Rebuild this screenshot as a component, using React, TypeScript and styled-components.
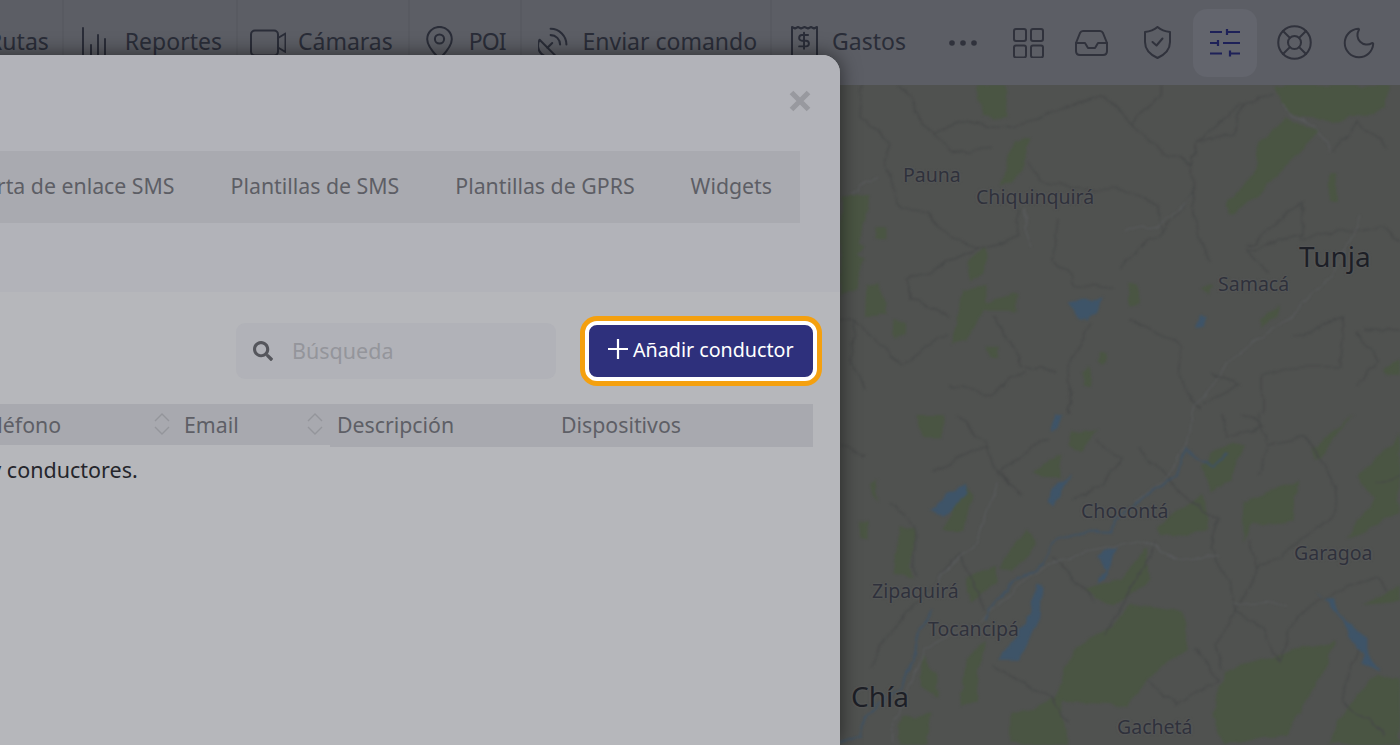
import React from "react";
import styled, { createGlobalStyle } from "styled-components";
import { LifeBuoy, Moon } from "lucide-react";
import { FaSearch } from "react-icons/fa";

const Global = createGlobalStyle`
  html, body { margin: 0; padding: 0; height: 100%; overflow: hidden; }
  * { box-sizing: border-box; }
  body { font-family: "Noto Sans", "Open Sans", Arial, sans-serif; }
`;

const Page = styled.div`
  position: relative;
  width: 1400px;
  height: 745px;
  overflow: hidden;
  display: flex;
  flex-direction: column;
  background: #505250;
`;

const TopBar = styled.header`
  flex: 0 0 85px;
  display: flex;
  justify-content: flex-end;
  align-items: stretch;
  padding-right: 9px;
  background: #5c5e65;
  color: #2a2d38;
  font-size: 23px;
`;

const NavItem = styled.div<{ $pl: number; $pr: number; $gap: number; $first?: boolean }>`
  flex: none;
  display: flex;
  align-items: center;
  gap: ${(p) => p.$gap}px;
  padding: 0 ${(p) => p.$pr}px 0 ${(p) => p.$pl}px;
  border-left: ${(p) => (p.$first ? "0" : "2px solid rgba(0, 0, 0, 0.035)")};
  white-space: nowrap;
`;

const NavLabel = styled.span<{ $tight?: boolean }>`
  margin-top: -3px;
  letter-spacing: ${(p) => (p.$tight ? "-1px" : "normal")};
`;

const IconButton = styled.div<{ $ml: number; $active?: boolean }>`
  flex: none;
  align-self: center;
  width: 64px;
  height: 68px;
  margin-left: ${(p) => p.$ml}px;
  display: flex;
  align-items: center;
  justify-content: center;
  border-radius: 14px;
  color: #30323c;
  background: ${(p) => (p.$active ? "#63656d" : "transparent")};
`;

const MapArea = styled.main`
  position: relative;
  flex: 1;
  overflow: hidden;
  background: #505250;
`;

const MapSvg = styled.svg`
  display: block;
  width: 1400px;
  height: 660px;
`;

const PlaceLabel = styled.span<{ $x: number; $y: number; $big?: boolean }>`
  position: absolute;
  left: ${(p) => p.$x}px;
  top: ${(p) => p.$y - 85}px;
  transform: translateY(-50%);
  font-size: ${(p) => (p.$big ? 28 : 19.5)}px;
  line-height: 1.2;
  color: ${(p) => (p.$big ? "#1d1f26" : "#2f313b")};
  text-shadow: 0 0 3px #5b5c5e, 0 0 2px #5b5c5e;
  white-space: nowrap;
`;

const Modal = styled.section`
  position: absolute;
  top: 55px;
  right: 560px;
  bottom: 0;
  width: 946px;
  display: flex;
  flex-direction: column;
  background: #b6b7bb;
  border-top-right-radius: 18px;
  box-shadow: 0 0 20px rgba(0, 0, 0, 0.55);
`;

const ModalHeader = styled.div`
  flex: none;
  padding: 96px 40px 69px 0;
  background: #b2b3b9;
  border-top-right-radius: 18px;
`;

const CloseButton = styled.div`
  position: absolute;
  top: 35px;
  right: 29px;
  width: 22px;
  height: 22px;
  color: #98999f;
`;

const TabStrip = styled.nav`
  display: flex;
  justify-content: flex-end;
  height: 72px;
  background: #a9aab0;
  overflow: hidden;
`;

const Tab = styled.span`
  flex: none;
  align-self: center;
  margin-bottom: 4px;
  padding: 0 28px;
  font-size: 21.3px;
  color: #5d5e65;
  white-space: nowrap;
`;

const Toolbar = styled.div`
  flex: none;
  display: flex;
  justify-content: flex-end;
  align-items: center;
  gap: 29px;
  padding: 29px 23px 23px 0;
`;

const SearchBox = styled.label`
  width: 320px;
  height: 56px;
  display: flex;
  align-items: center;
  gap: 19px;
  padding-left: 17px;
  border-radius: 9px;
  background: #b1b2b8;
  color: #55565c;
`;

const SearchInput = styled.input`
  flex: 1;
  min-width: 0;
  border: 0;
  outline: 0;
  padding: 0 0 2px;
  background: transparent;
  font: inherit;
  font-size: 21.5px;
  &::placeholder { color: #94959b; opacity: 1; }
`;

const PrimaryButton = styled.button`
  width: 232px;
  height: 60px;
  display: flex;
  align-items: center;
  gap: 5px;
  padding: 0 0 4px 19px;
  border: 4px solid #ffffff;
  border-radius: 12px;
  outline: 0;
  box-shadow: 0 0 0 5px #f4a00f;
  background: #2e307c;
  color: #ffffff;
  font: inherit;
  font-size: 19.7px;
  white-space: nowrap;
`;

const Table = styled.div`
  padding: 0 27px 0 28px;
`;

const HeadRow = styled.div`
  display: grid;
  grid-template-columns: 1fr 158px 219px 264px;
  align-items: start;
`;

const HeadCell = styled.div<{ $tall?: boolean; $pl: number; $pr: number }>`
  height: ${(p) => (p.$tall ? 43 : 41)}px;
  display: flex;
  align-items: flex-start;
  justify-content: space-between;
  padding: 5px ${(p) => p.$pr}px 0 ${(p) => p.$pl}px;
  line-height: 32px;
  font-size: 21.3px;
  color: #5e5f66;
  background: #a8a9af;
  white-space: nowrap;
`;

const SortGlyph = styled.svg`
  flex: none;
  margin-top: 4px;
  color: #94959b;
`;

const EmptyRow = styled.div`
  margin-top: 8px;
  padding-left: 8px;
  line-height: 30px;
  font-size: 21.5px;
  color: #25262c;
  white-space: nowrap;
`;

const line = { fill: "none", stroke: "currentColor", strokeWidth: 2, strokeLinecap: "round", strokeLinejoin: "round" } as const;

const ReportsIcon = () => (
  <svg width="28" height="34" viewBox="0 0 28 34" {...line}>
    <path d="M2 2V33M10 19V33M17 9V33M24 13V33" />
  </svg>
);
const VideoIcon = () => (
  <svg width="36" height="28" viewBox="0 0 36 28" {...line}>
    <rect x="1" y="1.5" width="27" height="25" rx="4" />
    <path d="M28 9L35.5 4.5V23L28 18.5" />
  </svg>
);
const PinIcon = () => (
  <svg width="27" height="34" viewBox="0 0 27 34" {...line}>
    <path d="M13.5 33C9 28 1.2 21 1.2 13.2a12.3 12.3 0 0 1 24.6 0C25.8 21 18 28 13.5 33Z" />
    <circle cx="13.5" cy="13" r="4.6" />
  </svg>
);
const DishIcon = () => (
  <svg width="30" height="32" viewBox="3 2 19 20" fill="none" stroke="currentColor" strokeWidth="1.3" strokeLinecap="round" strokeLinejoin="round">
    <path d="M4 10a7.31 7.31 0 0 0 10 10Z" />
    <path d="m9 15 3-3" />
    <path d="M17 13a6 6 0 0 0-6-6" />
    <path d="M21 13A10 10 0 0 0 11 3" />
  </svg>
);
const ReceiptIcon = () => (
  <svg width="27" height="36" viewBox="0 0 27 36" {...line}>
    <path d="M1 35V2l3 1.5L7 2l3 1.5L13.5 2 17 3.500 20 2l3 1.500L26 2v33Z" />
    <g transform="translate(3.300 6) scale(.81)" strokeWidth="2.400">
      <path d="M12 2v20M17 5H9.500a3.500 3.500 0 0 0 0 7h5a3.500 3.500 0 0 1 0 7H6" />
    </g>
  </svg>
);
const DotsIcon = () => (
  <svg width="30" height="8" viewBox="0 0 30 8" fill="currentColor">
    <circle cx="4" cy="4" r="2.800" />
    <circle cx="15" cy="4" r="2.800" />
    <circle cx="26" cy="4" r="2.800" />
  </svg>
);
const GridIcon = () => (
  <svg width="31" height="30" viewBox="0 0 31 30" {...line}>
    <rect x="1" y="1" width="12" height="12" rx="2" />
    <rect x="18" y="1" width="12" height="12" rx="2" />
    <rect x="1" y="17.500" width="12" height="12" rx="2" />
    <rect x="18" y="17.500" width="12" height="12" rx="2" />
  </svg>
);
const InboxIcon = () => (
  <svg width="33" height="26" viewBox="0 0 33 26" {...line}>
    <path d="M8 1H25Q27 1 28 3L32 13V21Q32 25 28 25H5Q1 25 1 21V13L5 3Q6 1 8 1Z" />
    <path d="M1 13H10L13 18H20L23 13H32" />
  </svg>
);
const ShieldIcon = () => (
  <svg width="27" height="33" viewBox="0 0 27 33" {...line}>
    <path d="M13.500 1C17 4 21 5.500 26 6V16C26 24 20 29 13.500 32C7 29 1 24 1 16V6C6 5.500 10 4 13.500 1Z" />
    <path d="M8.500 16l4 3.500 6-7" />
  </svg>
);
const SlidersIcon = () => (
  <svg width="30" height="28" viewBox="0 0 30 28" fill="none" stroke="#1e2158" strokeWidth="2.200">
    <path d="M0 3H12M17 0V6M17 3H30M0 14H8M8 11V17M13 14H30M0 24.500H12M20 21.500V27.500M20 24.500H30" />
  </svg>
);
const CloseIcon = () => (
  <svg width="22" height="22" viewBox="0 0 22 22" fill="none" stroke="currentColor" strokeWidth="5.200">
    <path d="M2.500 2.500L19.500 19.500M19.500 2.500L2.500 19.500" />
  </svg>
);
const PlusIcon = () => (
  <svg width="20" height="20" viewBox="0 0 20 20" fill="none" stroke="currentColor" strokeWidth="2.200" style={{ flex: "none" }}>
    <path d="M10 0V20M0 10H20" />
  </svg>
);
const SortIcon = () => (
  <SortGlyph width="16" height="22" viewBox="0 0 16 22" fill="none" stroke="currentColor" strokeWidth="1.400">
    <path d="M1 8L8 1L15 8M1 14L8 21L15 14" />
  </SortGlyph>
);

const greens = [
  "1215,0 1540,0 1530,70 1400,110 1300,100 1230,60",
  "1250,100 1340,140 1260,230 1170,330 1090,390 1090,350 1170,250 1170,180",
  "340,620 410,600 410,650 500,630 500,680 400,680 350,770 310,780 330,700",
  "490,170 535,160 500,270 450,300 470,220",
  "380,0 470,0 465,90 400,100",
  "0,335 85,330 70,410 40,500 70,520 40,620 0,630",
  "75,600 115,595 130,690 70,690",
  "150,710 190,710 190,755 150,755",
  "410,780 445,780 440,820 420,820",
  "725,805 750,805 740,840 725,835",
  "680,860 705,850 700,900 680,900",
  "805,590 830,600 845,660 810,665",
  "1010,610 1040,595 1030,630",
  "1180,700 1225,660 1215,700 1180,730",
  "1370,265 1390,265 1395,345 1370,345",
  "360,520 410,480 410,560 370,590",
  "100,430 130,430 130,460 100,460",
  "1520,860 1568,830 1568,870 1530,870",
  "0,470 30,460 60,480 30,540 0,570",
];
const greensB = [
  "340,205 370,240 340,345 290,345 320,270",
  "170,340 210,340 200,490 150,480",
  "350,490 430,450 440,510 370,560",
  "520,345 545,390 480,470 445,460",
  "620,110 610,190 540,170",
  "650,50 730,40 670,110 640,90",
  "1040,110 1130,85 1090,200 1040,230 1010,160",
  "1130,260 1280,200 1270,320 1160,330 1130,380",
  "1020,240 1040,340 900,370 890,340 960,280",
  "850,400 870,500 760,570 680,520 790,490",
  "810,570 960,590 980,700 900,750 800,870 600,860 650,700 760,640",
  "1080,760 1390,680 1350,780 1250,960 1080,990 1040,900",
  "1500,780 1568,800 1568,990 1370,990 1410,890",
  "1450,190 1568,60 1568,300 1420,370 1500,250",
  "1320,100 1440,0 1330,130",
  "1470,570 1568,510 1568,560",
  "350,730 400,680 380,860 335,880",
  "170,900 260,900 230,990 170,990",
  "480,900 620,850 640,990 480,990",
  "90,210 110,200 100,260",
  "220,0 290,0 290,70 230,70",
  "50,320 80,320 80,380 55,375",
  "230,720 270,780 270,840 225,820",
];
const lakes = [
  "640,650 735,645 730,670 690,700 665,695",
  "1012,690 1030,690 1020,725 1000,730",
];
const lakesB = [
  "610,0 630,0 610,45 590,50",
  "345,205 355,235 290,310 255,285 300,240",
  "645,180 600,265 585,260 595,215",
  "780,395 740,405 720,425 745,470 725,505 745,490 760,440",
  "550,500 568,515 565,600 530,690 500,735 440,735 480,680 520,620 545,540",
  "1330,525 1350,545 1385,550 1410,610 1440,640 1480,670 1480,720 1505,770 1460,745 1470,720 1435,680 1400,600 1370,560",
];
const borders = [
  "50,90 140,170 125,230 170,370 240,380 300,450 380,490",
  "170,0 260,150 330,110 430,130 550,100 650,60 740,30 820,120 860,170 990,240 990,320 900,440 780,550",
  "260,150 310,200 420,190",
  "990,240 1000,170 1120,60 1210,30",
  "990,320 1000,450 1040,530",
  "520,230 560,290 680,310 800,310 890,370 900,440",
  "610,400 600,530 660,600 760,610",
  "500,380 500,460 380,490 190,590 190,640 300,690",
  "810,700 960,790 950,860 1010,980",
  "700,710 640,860 640,990",
  "40,710 180,840 300,740",
  "430,700 480,770 510,840 600,860",
  "1140,480 1300,350 1300,450 1140,490 1200,570",
  "1290,460 1400,440",
  "1270,760 1410,700 1400,840 1300,840 1180,870 1180,990",
  "1530,180 1450,110 1380,200",
  "1470,730 1568,740",
  "60,0 50,90",
  "820,120 900,30 900,0",
  "1130,60 1100,150 1000,170",
  "1450,900 1510,830 1450,740",
  "1040,860 1120,900 1020,960",
  "0,700 40,710 30,820 70,920",
  "300,900 420,930 520,860",
  "1400,440 1520,420 1568,470",
];
const bordersB = [
  "0,90 70,120",
  "410,90 430,160 510,240",
  "580,70 500,130 440,180 480,210",
  "840,100 920,200 1060,320 1040,400 1090,510 1110,590 1050,690 1070,760",
  "1150,380 1170,470 1390,300 1380,200 1310,70",
  "1170,470 1110,590 1180,640 1230,740 1280,600 1350,550 1500,490 1530,530",
  "140,260 210,330 210,480",
  "340,420 260,510 120,680 90,760",
  "340,420 360,470 410,590",
  "430,750 600,860 640,920",
  "790,570 740,670",
  "880,390 790,570",
  "600,430 720,560",
  "720,80 790,130 730,210 650,260",
  "1070,0 1090,70 1190,30 1130,0",
  "1310,70 1200,90",
  "1170,0 1200,90 1170,180",
  "1000,700 1060,800 940,870 860,800",
  "1450,700 1400,860 1530,960",
  "330,0 410,90 260,170",
  "1500,200 1568,180",
];
const roads = [
  "980,990 1100,820 1280,680 1400,540 1460,390",
  "1230,60 1330,130 1370,200",
  "800,440 890,420 990,330",
  "510,380 540,480",
  "100,270 30,330",
];
const roadsB = [
  "980,0 970,100 900,200 830,260",
  "150,990 150,920 240,700 400,620 530,480 680,410 830,380 960,430 1060,420",
  "1100,570 1250,560",
  "440,200 380,390 260,510",
];
const riversB = [
  "1090,110 1040,160 975,105 940,180 850,250 770,320 760,350 680,350 600,380 570,450 490,495 430,570 410,620",
  "260,590 220,640 200,760 170,820 60,910 60,960 0,985",
];

const MapLayer = ({ g, l, b, r, w }: { g: string[]; l: string[]; b: string[]; r: string[]; w?: string[] }) => (
  <>
    {g.map((p) => <polygon key={p} points={p} fill="#4a5543" />)}
    {b.map((p) => <polyline key={p} points={p} fill="none" stroke="#464848" strokeWidth="3.500" />)}
    {r.map((p) => <polyline key={p} points={p} fill="none" stroke="#5a5c5e" strokeWidth="3" />)}
    {w?.map((p) => <polyline key={p} points={p} fill="none" stroke="#3f5264" strokeWidth="5" />)}
    {l.map((p) => <polygon key={p} points={p} fill="#3e5468" />)}
  </>
);

const places = [
  { t: "Pauna", x: 903, y: 175 },
  { t: "Chiquinquirá", x: 976, y: 197 },
  { t: "Tunja", x: 1299, y: 257, big: true },
  { t: "Samacá", x: 1218, y: 284 },
  { t: "Chocontá", x: 1081, y: 511 },
  { t: "Garagoa", x: 1294, y: 553 },
  { t: "Zipaquirá", x: 872, y: 591 },
  { t: "Tocancipá", x: 928, y: 629 },
  { t: "Chía", x: 851, y: 697, big: true },
  { t: "Gachetá", x: 1117, y: 727 },
];

export default function App() {
  return (
    <Page>
      <Global />
      <TopBar>
        <NavItem $first $pl={0} $pr={13} $gap={0}><NavLabel>Rutas</NavLabel></NavItem>
        <NavItem $pl={17} $pr={14} $gap={16}><ReportsIcon /><NavLabel>Reportes</NavLabel></NavItem>
        <NavItem $pl={12} $pr={15} $gap={12}><VideoIcon /><NavLabel>Cámaras</NavLabel></NavItem>
        <NavItem $pl={16} $pr={15} $gap={16}><PinIcon /><NavLabel $tight>POI</NavLabel></NavItem>
        <NavItem $pl={16} $pr={13} $gap={14}><DishIcon /><NavLabel>Enviar comando</NavLabel></NavItem>
        <NavItem $pl={19} $pr={25} $gap={14}><ReceiptIcon /><NavLabel>Gastos</NavLabel></NavItem>
        <IconButton $ml={0}><DotsIcon /></IconButton>
        <IconButton $ml={1}><GridIcon /></IconButton>
        <IconButton $ml={-1}><InboxIcon /></IconButton>
        <IconButton $ml={2}><ShieldIcon /></IconButton>
        <IconButton $ml={4} $active><SlidersIcon /></IconButton>
        <IconButton $ml={5}><LifeBuoy size={39} strokeWidth={1.25} /></IconButton>
        <IconButton $ml={1}><Moon size={38} strokeWidth={1.25} /></IconButton>
      </TopBar>
      <MapArea>
        <MapSvg viewBox="0 0 1400 660">
          <defs>
            <filter id="soft" x="0" y="0" width="100%" height="100%" colorInterpolationFilters="sRGB">
              <feTurbulence type="fractalNoise" baseFrequency="0.045" numOctaves="3" seed="4" result="n" />
              <feDisplacementMap in="SourceGraphic" in2="n" scale="11" xChannelSelector="R" yChannelSelector="G" />
              <feGaussianBlur stdDeviation="0.8" />
            </filter>
          </defs>
          <g filter="url(#soft)">
            <g transform="translate(840 0) scale(.357 .333)">
              <MapLayer g={greens} l={lakes} b={borders} r={roads} />
            </g>
            <g transform="translate(840 330) scale(.357 .333)">
              <MapLayer g={greensB} l={lakesB} b={bordersB} r={roadsB} w={riversB} />
            </g>
          </g>
        </MapSvg>
        {places.map((p) => (
          <PlaceLabel key={p.t} $x={p.x} $y={p.y} $big={p.big}>{p.t}</PlaceLabel>
        ))}
      </MapArea>
      <Modal>
        <CloseButton><CloseIcon /></CloseButton>
        <ModalHeader>
          <TabStrip>
            <Tab>Puerta de enlace SMS</Tab>
            <Tab>Plantillas de SMS</Tab>
            <Tab>Plantillas de GPRS</Tab>
            <Tab>Widgets</Tab>
          </TabStrip>
        </ModalHeader>
        <Toolbar>
          <SearchBox>
            <FaSearch size={20} style={{ flex: "none" }} />
            <SearchInput placeholder="Búsqueda" readOnly />
          </SearchBox>
          <PrimaryButton><PlusIcon />Añadir conductor</PrimaryButton>
        </Toolbar>
        <Table>
          <HeadRow>
            <HeadCell $pl={53} $pr={2}>Teléfono<SortIcon /></HeadCell>
            <HeadCell $pl={12} $pr={7}>Email<SortIcon /></HeadCell>
            <HeadCell $tall $pl={7} $pr={7}>Descripción</HeadCell>
            <HeadCell $tall $pl={12} $pr={12}>Dispositivos</HeadCell>
          </HeadRow>
          <EmptyRow>No hay conductores.</EmptyRow>
        </Table>
      </Modal>
    </Page>
  );
}
